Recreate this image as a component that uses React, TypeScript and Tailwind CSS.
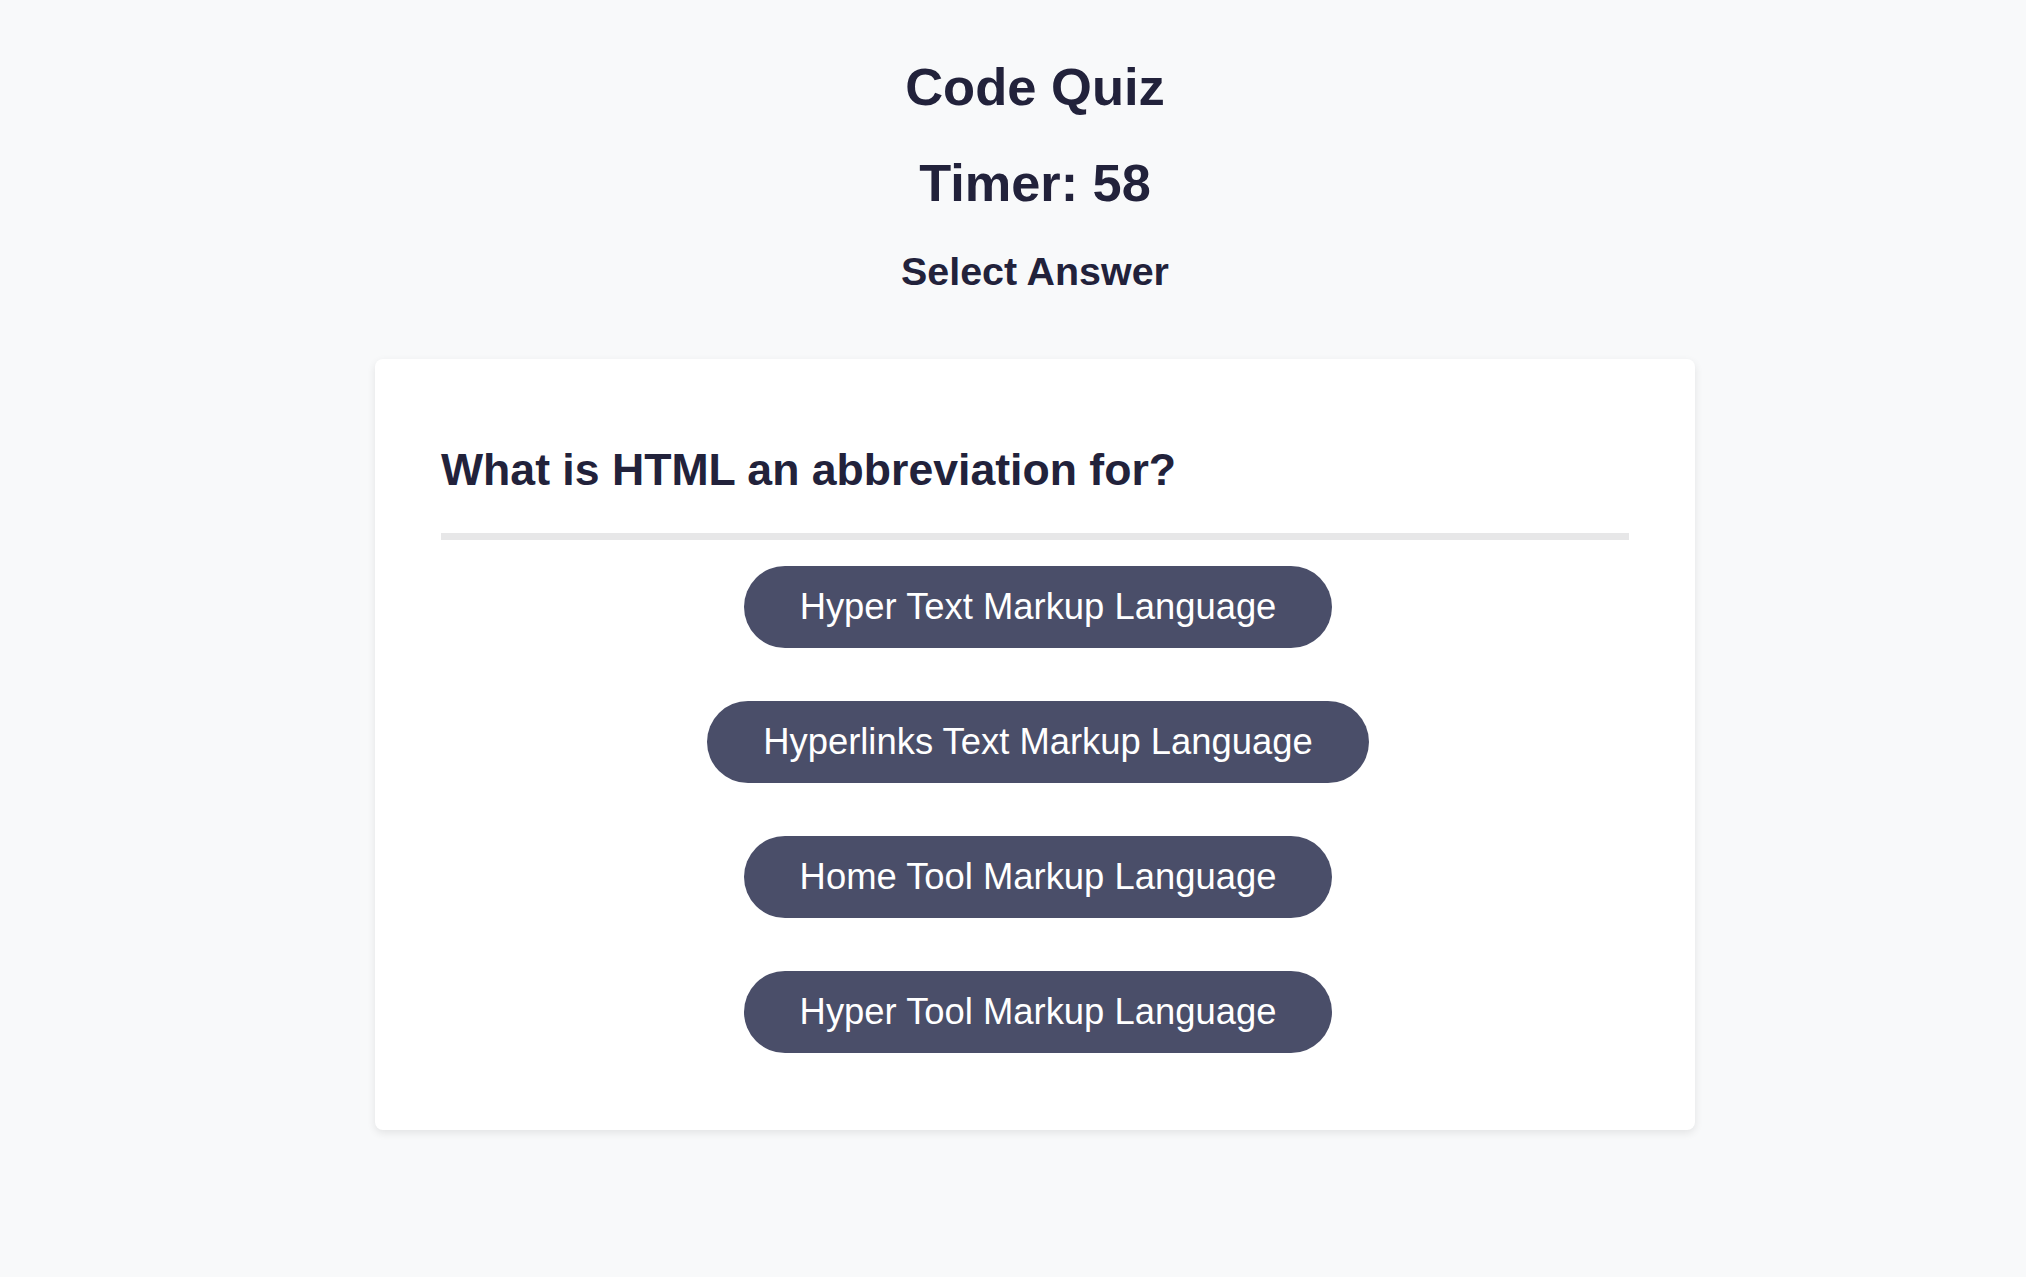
const answers = [
  "Hyper Text Markup Language",
  "Hyperlinks Text Markup Language",
  "Home Tool Markup Language",
  "Hyper Tool Markup Language",
];

const App = () => {
  return (
    <div
      className="min-h-screen bg-[#f8f9fa] pl-[44px] text-[#22223b]"
      style={{ fontFamily: '"Liberation Sans", Arial, sans-serif' }}
    >
      <header className="flex flex-col items-center pt-[57px]">
        <h1 className="text-[52.5px] font-bold leading-[60px]">Code Quiz</h1>
        <h2 className="mt-[36px] text-[52.3px] font-bold leading-[60px]">
          Timer: 58
        </h2>
        <h3 className="mt-[36px] text-[39.4px] font-bold leading-[45px]">
          Select Answer
        </h3>
      </header>

      <main className="mx-auto mt-[65px] w-[1320px] rounded-lg bg-white px-[66px] pt-[85px] pb-[77px] shadow-[0_3px_8px_rgba(0,0,0,0.09)]">
        <h2 className="text-[44.6px] font-bold leading-[52px]">
          What is HTML an abbreviation for?
        </h2>
        <div className="mt-[37px] h-[7px] bg-[#e7e7e8]" />
        <div className="mt-[26px] ml-[6px] flex flex-col items-center gap-[53px]">
          {answers.map((a, i) => (
            <button
              key={i}
              className="rounded-full bg-[#4a4e69] px-[56px] py-[20px] text-[36.4px] leading-[42px] text-white"
            >
              {a}
            </button>
          ))}
        </div>
      </main>
    </div>
  );
};

export default App;
